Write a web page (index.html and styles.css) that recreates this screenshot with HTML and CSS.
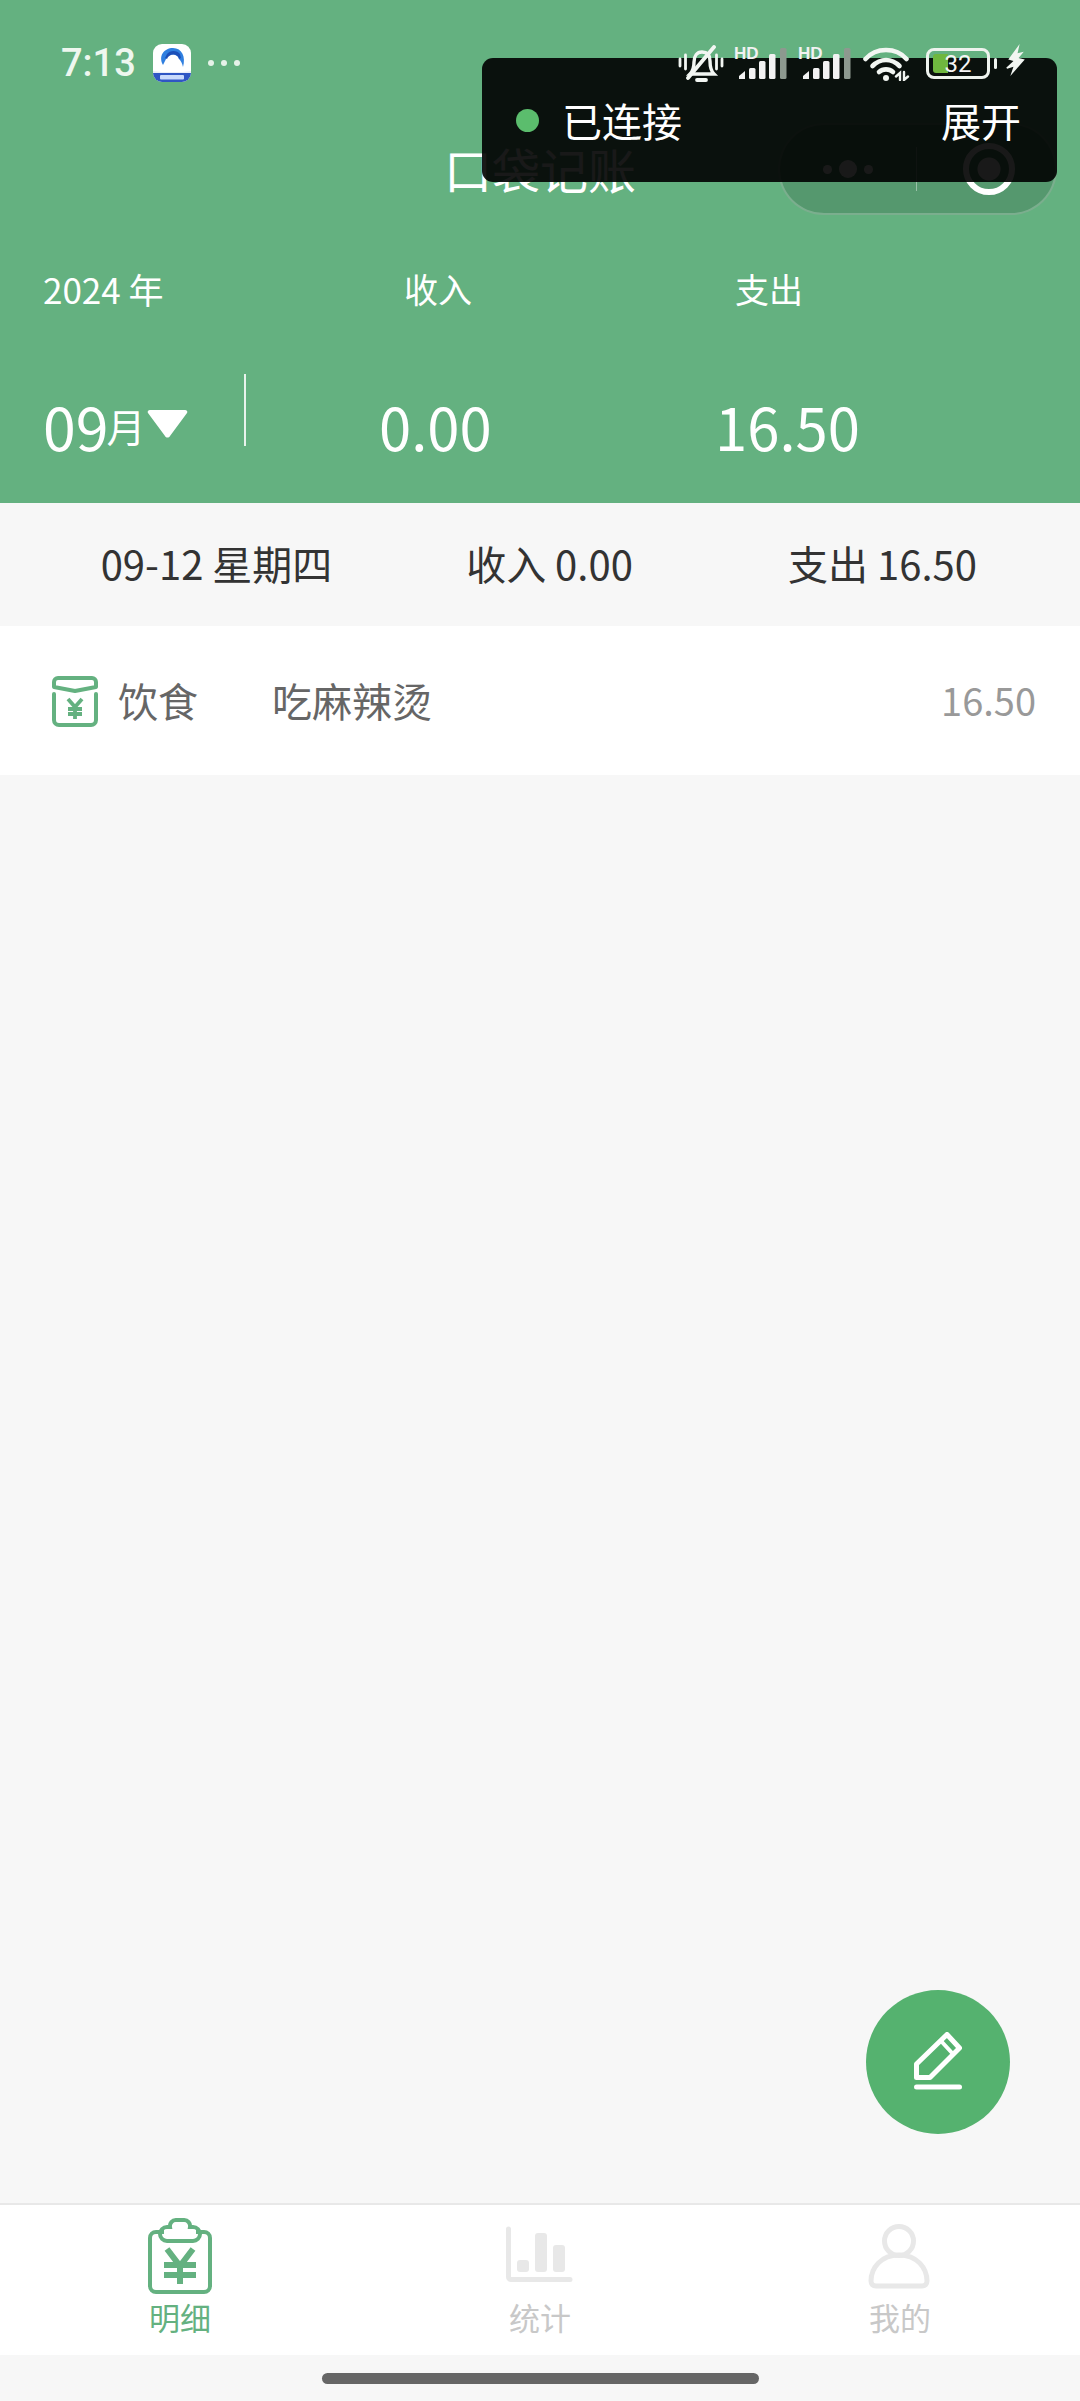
FILE: index.html
```html
<!DOCTYPE html>
<html lang="zh-CN">
<head>
<meta charset="utf-8">
<title>口袋记账</title>
<link rel="stylesheet" href="styles.css">
</head>
<body>
<div class="app">
  <header class="hero">
    <div class="statusbar">
      <div class="status-left">
        <span class="clock">7:13</span>
        <svg class="app-logo" viewBox="0 0 38 38">
          <rect width="38" height="38" rx="9" fill="#fff"/>
          <path d="M0 28h38v1a9 9 0 0 1-9 9H9a9 9 0 0 1-9-9z" fill="#2f56c4"/>
          <path d="M0 27l9 1h20l9-1v2H0z" fill="#e9eef8"/>
          <path d="M10 21C5 12 11 4 20 4c9 0 13 9 10 19-1-4-2-6-4-8-1-6-12-6-13 0-1 2-2 4-3 6z" fill="#2f7fe0"/>
          <path d="M14 10c3-4 10-4 13 0l1 4-2 1c-1-6-10-6-12 0l-2-1z" fill="#1b4fb8"/>
          <rect x="7" y="31" width="24" height="4.5" rx="1" fill="#c9dafc"/>
        </svg>
        <span class="more-dots"><i></i><i></i><i></i></span>
      </div>
      <div class="status-right">
        <svg class="ic-bell" viewBox="0 0 46 38" fill="none" stroke="#f2f6f2" stroke-width="3.4" stroke-linecap="round">
          <path d="M2 14v7M7.5 10v14M38.5 10v14M44 14v7" stroke-width="2.8"/>
          <path d="M12 29c3-3 4-6 4-12 0-6 3-10 8-10s8 3 8 9c0 6 1 10 4 13z"/>
          <path d="M19 35h9" stroke-width="3.8"/>
          <path d="M10 33L36 2" stroke-width="3.8"/>
        </svg>
        <svg class="ic-signal" viewBox="0 0 52 31">
          <text x="-1" y="11" class="hd">HD</text>
          <path d="M4 31v-3l6-5v8z" fill="#f2f2f2"/>
          <rect x="14" y="20" width="6.5" height="11" rx="1.5" fill="#f2f2f2"/>
          <rect x="24" y="13" width="6.5" height="18" rx="1.5" fill="#f2f2f2"/>
          <rect x="34" y="6" width="6.5" height="25" rx="1.5" fill="#f2f2f2"/>
          <rect x="45" y="0" width="6.5" height="31" rx="1.5" fill="#8d998f"/>
        </svg>
        <svg class="ic-signal" viewBox="0 0 52 31">
          <text x="-1" y="11" class="hd">HD</text>
          <path d="M4 31v-3l6-5v8z" fill="#f2f2f2"/>
          <rect x="14" y="20" width="6.5" height="11" rx="1.5" fill="#f2f2f2"/>
          <rect x="24" y="13" width="6.5" height="18" rx="1.5" fill="#f2f2f2"/>
          <rect x="34" y="6" width="6.5" height="25" rx="1.5" fill="#f2f2f2"/>
          <rect x="45" y="0" width="6.5" height="31" rx="1.5" fill="#8d998f"/>
        </svg>
        <svg class="ic-wifi" viewBox="0 0 47 34" fill="none" stroke="#f2f6f2" stroke-width="4.6" stroke-linecap="round">
          <path d="M2.5 12C13 0 33 0 43.500 12"/>
          <path d="M9.500 19c8-8 19-8 27 0"/>
          <path d="M16 25c4-3.500 10-3.500 14 0"/>
          <circle cx="23" cy="31" r="3" fill="#f2f6f2" stroke="none"/>
          <path d="M37 33v-7l-4 3.500M41 25v8l4-3.500" stroke-width="2.400"/>
        </svg>
        <div class="battery">
          <div class="battery-body"><span class="battery-fill"></span><span class="battery-num">32</span></div>
          <span class="battery-tip"></span>
        </div>
        <svg class="ic-bolt" viewBox="0 0 20 31"><path d="M14 0L3 15l5 1.500L1 23l1 1 6-2L5 31l14-16-6-1.500 5-6-6 1.500z" fill="#f2f6f2"/></svg>
      </div>
    </div>
    <div class="navbar">
      <h1 class="title">口袋记账</h1>
      <div class="capsule">
        <div class="capsule-dots"><i></i><b></b><i></i></div>
        <span class="capsule-line"></span>
        <div class="capsule-close"></div>
      </div>
    </div>
    <div class="summary">
      <div class="month-col">
        <div class="label label-year">2024 年</div>
        <div class="month"><span class="month-num">09</span><span class="month-unit">月</span><svg class="caret" viewBox="0 0 41 29"><path d="M3 1h35c2 0 3 2 2 3L23 27c-1 2-4 2-5 0L1 4C0 3 1 1 3 1z" fill="#fff"/></svg></div>
        <span class="divider"></span>
      </div>
      <div class="sum-col sum-in">
        <div class="label">收入</div>
        <div class="amount">0.00</div>
      </div>
      <div class="sum-col sum-out">
        <div class="label">支出</div>
        <div class="amount">16.50</div>
      </div>
    </div>
  </header>

  <div class="notice">
    <span class="notice-dot"></span>
    <span class="notice-text">已连接</span>
    <span class="notice-action">展开</span>
  </div>

  <main class="content">
    <div class="day-head">
      <span>09-12 星期四</span>
      <span>收入 0.00</span>
      <span>支出 16.50</span>
    </div>
    <div class="record">
      <svg class="record-icon" viewBox="0 0 46 51" fill="none" stroke="#64b180" stroke-width="4" stroke-linejoin="round" stroke-linecap="round">
        <path d="M6 2h34a4 4 0 0 1 4 4v5L23 15 2 11V6a4 4 0 0 1 4-4z"/>
        <path d="M2 18v26a5 5 0 0 0 5 5h32a5 5 0 0 0 5-5V18"/>
        <path d="M16 23l7 8 7-8M16 33h14M16 38h14M23 31v12" stroke-width="3.8" stroke-linecap="butt"/>
      </svg>
      <span class="record-cat">饮食</span>
      <span class="record-note">吃麻辣烫</span>
      <span class="record-amt">16.50</span>
    </div>
    <button class="fab" type="button" aria-label="记一笔">
      <svg viewBox="0 0 48 60" fill="none" stroke="#fff" stroke-width="5" stroke-linejoin="round" stroke-linecap="round">
        <path d="M2.500 45.500V32L33 2.500 45.500 16 16 45.500z"/>
        <path d="M27 9l12 13" stroke-width="4"/>
        <path d="M2.500 55h43" stroke-width="5"/>
      </svg>
    </button>
  </main>

  <nav class="tabbar">
    <div class="tab tab-on">
      <svg class="tab-icon" viewBox="0 0 64 76" fill="none" stroke="#64b180" stroke-width="4">
        <path d="M16 14H8a6 6 0 0 0-6 6v48a6 6 0 0 0 6 6h48a6 6 0 0 0 6-6V20a6 6 0 0 0-6-6h-8"/>
        <path d="M22 9a6 6 0 0 1 6-7h8a6 6 0 0 1 6 7h3a7 7 0 0 1 0 14H19a7 7 0 0 1 0-14z"/>
        <path d="M19 31l13 17 13-17M16 47h32M16 57h32M32 47v19" stroke-width="6"/>
      </svg>
      <span class="tab-label">明细</span>
    </div>
    <div class="tab">
      <svg class="tab-icon tab-icon-free" viewBox="0 0 64 76" fill="none">
        <path d="M.5 11v48a2.500 2.500 0 0 0 2.500 2.500h59" stroke="#e8e8e8" stroke-width="5" stroke-linecap="round"/>
        <rect x="9" y="42" width="12" height="12" rx="3" fill="#e8e8e8"/>
        <rect x="27" y="15" width="12" height="39" rx="3" fill="#e8e8e8"/>
        <rect x="45" y="27" width="12" height="27" rx="3" fill="#e8e8e8"/>
      </svg>
      <span class="tab-label">统计</span>
    </div>
    <div class="tab">
      <svg class="tab-icon" viewBox="0 0 64 76" fill="none" stroke="#e8e8e8" stroke-width="5">
        <circle cx="31" cy="23" r="14.500"/>
        <path d="M31 37C13 37 3 50 3 63c0 3 2 5 5 5h46c3 0 5-2 5-5C59 50 49 37 31 37z"/>
      </svg>
      <span class="tab-label">我的</span>
    </div>
  </nav>

  <div class="gesture"><span class="gesture-bar"></span></div>
</div>
</body>
</html>
```

FILE: styles.css
```css
* { box-sizing: border-box; }
html, body { margin: 0; padding: 0; }
body {
  width: 1080px;
  height: 2401px;
  background: #f7f7f7;
  font-family: "Noto Sans CJK SC", "Noto Sans", sans-serif;
  overflow: hidden;
}
.app {
  position: relative;
  width: 1080px;
  height: 2401px;
  display: flex;
  flex-direction: column;
}

/* header */
.hero {
  height: 503px;
  background: #64b180;
  color: #fff;
  display: flex;
  flex-direction: column;
  flex: none;
}
.statusbar {
  position: relative;
  z-index: 3;
  height: 123px;
  padding: 44px 0 0 61px;
  display: flex;
  justify-content: space-between;
  align-items: flex-start;
  flex: none;
}
.status-left { display: flex; align-items: center; height: 38px; }
.clock {
  font-family: Roboto, sans-serif;
  font-size: 38px;
  font-weight: 500;
  color: #eef7ef;
  width: 92px;
}
.app-logo { width: 38px; height: 38px; }
.more-dots { display: flex; gap: 7px; margin-left: 17px; }
.more-dots i { width: 6px; height: 6px; border-radius: 50%; background: #e6f2e8; }
.status-right {
  display: flex;
  align-items: flex-start;
  margin-right: 54px;
  height: 40px;
}
.ic-bell { width: 46px; height: 38px; margin-top: 1px; margin-right: 11px; }
.ic-signal { width: 52px; height: 31px; margin-right: 12px; margin-top: 4px; overflow: visible; }
.ic-signal + .ic-signal { margin-right: 12px; }
.hd { font: 700 17px "Liberation Sans", sans-serif; fill: #f2f2f2; }
.ic-wifi { width: 47px; height: 34px; margin-right: 16px; margin-top: 3px; }
.battery { display: flex; align-items: center; margin-top: 4px; }
.battery-body {
  position: relative;
  width: 64px;
  height: 31px;
  border: 3px solid #eef3ee;
  border-radius: 8px;
  padding: 3px 4px;
  display: flex;
}
.battery-fill { width: 15px; background: #6fb73f; border-radius: 3px 0 0 3px; }
.battery-num {
  position: absolute;
  left: 0;
  right: 0;
  top: 50%;
  transform: translateY(-50%);
  text-align: center;
  font: 400 24px/1 Roboto, sans-serif;
  color: #f5f5f5;
}
.battery-tip { width: 3px; height: 11px; margin-left: 4px; background: #eef3ee; border-radius: 2px; }
.ic-bolt { width: 21px; height: 32px; margin-left: 8px; }

.navbar {
  position: relative;
  height: 91px;
  flex: none;
}
.title {
  margin: 0;
  text-align: center;
  font-size: 48px;
  font-weight: 400;
  line-height: 91px;
  color: #fff;
}
.capsule {
  position: absolute;
  right: 23px;
  top: 0;
  width: 279px;
  height: 92px;
  border-radius: 46px;
  background: rgba(0, 0, 0, 0.14);
  border: 2px solid rgba(255, 255, 255, 0.22);
  display: flex;
  align-items: center;
}
.capsule-dots { width: 136px; display: flex; justify-content: center; align-items: center; gap: 7px; }
.capsule-dots i { width: 9px; height: 9px; border-radius: 50%; background: #fff; }
.capsule-dots b { width: 18px; height: 18px; border-radius: 50%; background: #fff; }
.capsule-line { width: 1px; height: 44px; background: rgba(255, 255, 255, 0.4); }
.capsule-close {
  margin-left: 46px;
  width: 52px;
  height: 52px;
  border-radius: 50%;
  border: 6px solid #fff;
  background: radial-gradient(circle, #fff 0 11px, transparent 12px);
}

.summary {
  flex: 1;
  display: flex;
  position: relative;
  padding: 50px 0 0 43px;
}
.label {
  font-size: 34px;
  font-weight: 400;
  line-height: 50px;
  color: #fff;
}
.label-year { font-size: 35px; }
.month-col { position: relative; width: 361px; }
.month {
  display: flex;
  align-items: center;
  margin-top: 70px;
  height: 84px;
}
.month-num { font-size: 59px; font-weight: 400; line-height: 84px; }
.month-unit { font-size: 39px; font-weight: 400; margin-left: -2px; line-height: 84px; margin-top: -2px; }
.caret { width: 41px; height: 29px; margin-left: 1px; margin-top: -5px; }
.divider {
  position: absolute;
  left: 201px;
  top: 110px;
  width: 2px;
  height: 72px;
  background: rgba(255, 255, 255, 0.85);
}
.sum-col { display: flex; flex-direction: column; }
.sum-in { width: 331px; }
.amount {
  font-size: 58px;
  font-weight: 400;
  line-height: 84px;
  margin-top: 70px;
  white-space: nowrap;
}
.sum-in .amount { margin-left: -25px; }
.sum-out .amount { margin-left: -20px; }

/* connection notice */
.notice {
  position: absolute;
  z-index: 2;
  left: 482px;
  top: 58px;
  width: 575px;
  height: 124px;
  border-radius: 11px;
  background: rgba(0, 0, 0, 0.9);
  color: #fff;
  display: flex;
  align-items: center;
  padding: 0 36px 0 34px;
  font-size: 40px;
  font-weight: 400;
}
.notice-dot { width: 23px; height: 23px; border-radius: 50%; background: #5bbd6d; margin-right: 23px; flex: none; }
.notice-text { flex: 1; }

/* list */
.content { flex: 1; position: relative; }
.day-head {
  height: 123px;
  display: grid;
  grid-template-columns: repeat(3, 333px);
  padding: 0 0 3px 50px;
  align-items: center;
  text-align: center;
  font-size: 40px;
  font-weight: 400;
  color: #333;
}
.record {
  height: 149px;
  background: #fff;
  display: flex;
  align-items: center;
  padding: 0 44px 2px 52px;
  font-size: 40px;
  font-weight: 400;
  color: #666;
}
.record-icon { width: 46px; height: 51px; flex: none; margin-top: 4px; }
.record-cat { width: 154px; margin-left: 20px; }
.record-note { flex: 1; }
.record-amt { font-size: 38px; color: #999; }
.fab {
  position: absolute;
  right: 70px;
  top: 1487px;
  width: 144px;
  height: 144px;
  border: 0;
  padding: 0;
  border-radius: 50%;
  background: #55b26f;
  display: flex;
  align-items: center;
  justify-content: center;
}
.fab svg { width: 48px; height: 60px; }

/* tabs */
.tabbar {
  height: 152px;
  flex: none;
  background: #fff;
  border-top: 2px solid #e8e8e8;
  display: grid;
  grid-template-columns: repeat(3, 1fr);
}
.tab {
  display: flex;
  flex-direction: column;
  align-items: center;
  padding-top: 13px;
}
.tab-icon { width: 64px; height: 76px; display: block; }
.tab-icon-free { overflow: visible; }
.tab-label {
  font-size: 31px;
  font-weight: 400;
  line-height: 46px;
  color: #c8c8c8;
}
.tab-on .tab-label { color: #64b180; }
.gesture {
  height: 46px;
  flex: none;
  display: flex;
  justify-content: center;
  padding-top: 18px;
}
.gesture-bar { width: 437px; height: 11px; border-radius: 6px; background: #666; }
```
